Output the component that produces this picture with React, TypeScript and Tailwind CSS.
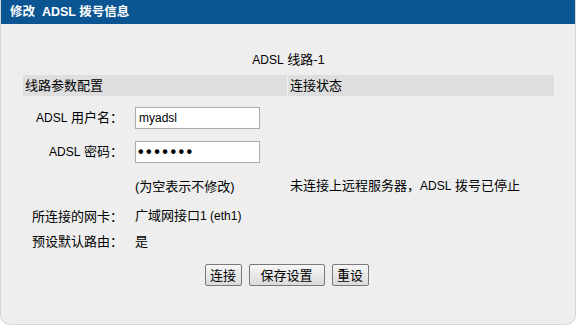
const font = { fontFamily: '"Liberation Sans", "Noto Sans CJK SC", sans-serif' };

const L: React.FC<{ children: React.ReactNode }> = ({ children }) => <span className="text-[12px]">{children}</span>;

const Field: React.FC<{ label: React.ReactNode; children: React.ReactNode; className?: string }> = ({ label, children, className }) => (
  <div className={`flex items-center ${className ?? ''}`}>
    <div className="w-[100px] shrink-0 text-right">{label}</div>
    <div className="ml-[12px]">{children}</div>
  </div>
);

const Btn: React.FC<{ label: string; width: string }> = ({ label, width }) => (
  <button
    className={`${width} h-[22px] rounded-[2px] border border-[#7a7a7a] bg-gradient-to-b from-[#f7f7f7] to-[#dadada] text-[13px] text-black leading-none`}
  >
    {label}
  </button>
);

export default function App() {
  return (
    <div className="w-[578px] h-[325px] bg-white text-[13px] text-black leading-[15px]" style={font}>
      <div className="w-[576px] h-[325px] rounded-b-[10px] bg-[#eeeeee] border-x border-b border-[#d6d6d6] overflow-hidden">
        <div className="h-[24px] bg-[#0b5592] pl-[9px] flex items-center text-white text-[12.5px] font-bold">
          修改&nbsp;&nbsp;ADSL 拨号信息
        </div>

        <div className="mx-[22px] w-[531px]">
          <div className="pt-[28px] h-[51px] text-center">
            <L>ADSL</L> 线路-1
          </div>

          <div className="grid grid-cols-[264px_266px] gap-x-[1px]">
            <div className="bg-[#dedede] h-[21px] pl-[2px] flex items-center">线路参数配置</div>
            <div className="bg-[#dedede] h-[21px] pl-[2px] flex items-center">连接状态</div>

            <div className="flex flex-col">
              <Field label={<><L>ADSL</L> 用户名：</>} className="mt-[11px]">
                <input
                  readOnly
                  defaultValue="myadsl"
                  className="w-[125px] h-[22px] bg-white border border-[#a9adb1] px-[3px] text-[12px] outline-none"
                  style={font}
                />
              </Field>
              <Field label={<><L>ADSL</L> 密码：</>} className="mt-[12px]">
                <input
                  readOnly
                  type="password"
                  defaultValue="1234567"
                  className="w-[125px] h-[22px] bg-white border border-[#a9adb1] pl-[2px] pr-[3px] text-[16px] font-bold tracking-[2.5px] outline-none"
                  style={font}
                />
              </Field>
              <Field label="" className="mt-[16px] h-[14px]">
                <span>(为空表示不修改)</span>
              </Field>
            </div>
            <div className="pt-[82px] pl-[2px]">
              <span>未连接上远程服务器，<L>ADSL</L> 拨号已停止</span>
            </div>
          </div>

          <Field label="所连接的网卡：" className="mt-[15px] h-[14px]">
            <span>广域网接口<L>1 (eth1)</L></span>
          </Field>
          <Field label="预设默认路由：" className="mt-[11px] h-[14px]">
            <span>是</span>
          </Field>

          <div className="mt-[16px] flex justify-center gap-[7px] pr-[4px]">
            <Btn label="连接" width="w-[37px]" />
            <Btn label="保存设置" width="w-[76px]" />
            <Btn label="重设" width="w-[37px]" />
          </div>
        </div>
      </div>
    </div>
  );
}
